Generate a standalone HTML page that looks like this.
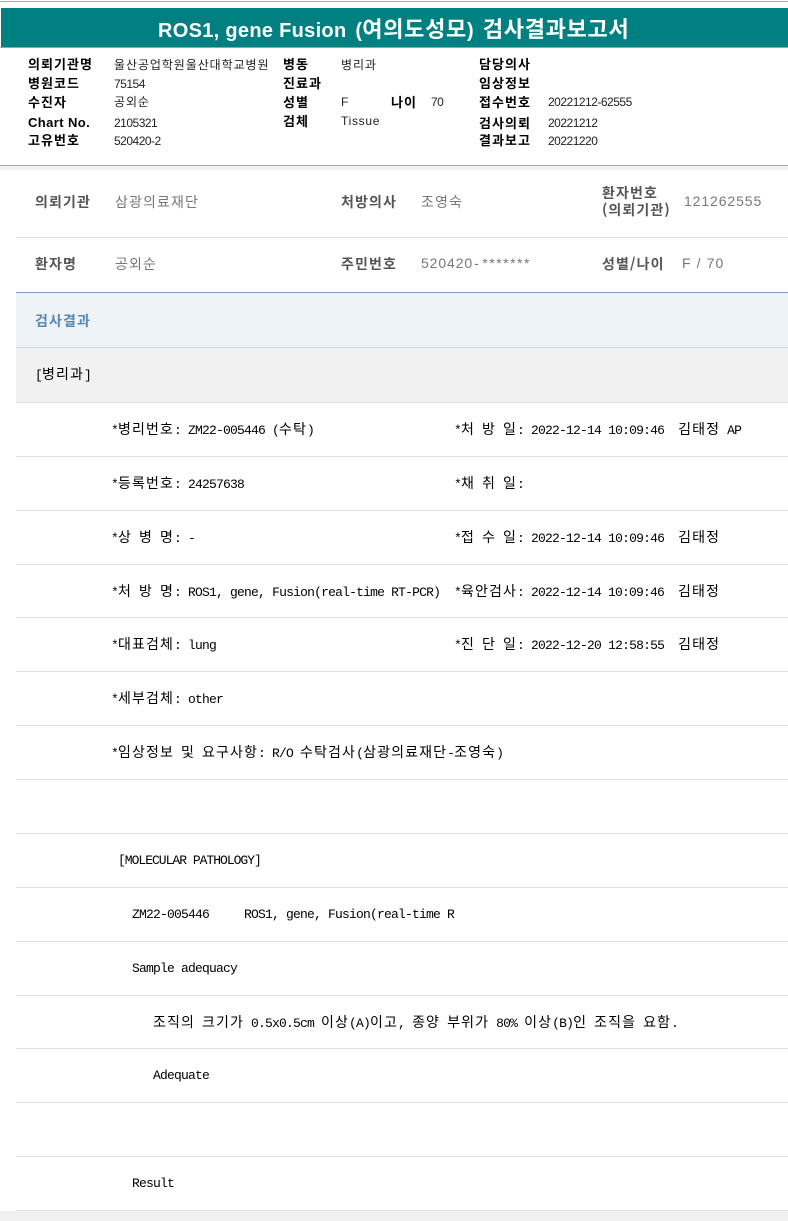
<!DOCTYPE html>
<html lang="ko"><head><meta charset="utf-8"><title>검사결과보고서</title>
<style>
html,body{margin:0;padding:0;background:#fff}
#p{position:relative;width:788px;height:1221px;overflow:hidden;background:#fff}
#p div{position:absolute;white-space:pre}
.r{height:1px;left:16px;width:772px;background:#e0e0e0}
.m{font:13px/20px "Liberation Mono","Noto Sans CJK KR",monospace;letter-spacing:-.8px;color:#000;height:20px}
.m i{font:14px/20px "Noto Sans CJK KR",sans-serif;letter-spacing:1.12px}
.hl,.hv{height:18px}
.hl{font:bold 13px/18px "Noto Sans CJK KR","Liberation Sans",sans-serif;letter-spacing:1.05px;color:#000}
.hl.e{font-family:"Liberation Sans","Noto Sans CJK KR",sans-serif;letter-spacing:.4px}
.hv{font:12px/18px "Noto Sans CJK KR",sans-serif;letter-spacing:.92px;color:#222}
.hv.n{font-family:"Liberation Sans",sans-serif;letter-spacing:-.5px}
.hv.t{font-family:"Liberation Sans",sans-serif;letter-spacing:.7px}
.l,.v{height:20px}
.l{font:bold 14px/20px "Noto Sans CJK KR","Liberation Sans",sans-serif;letter-spacing:1.12px;color:#555}
.v{font:14px/20px "Noto Sans CJK KR",sans-serif;letter-spacing:1.12px;color:#777}
.v.n{font-family:"Liberation Sans",sans-serif;letter-spacing:.9px}
.tt{font:bold 20px/32px "Liberation Sans",sans-serif;letter-spacing:.3px;color:#fff}
.tt i{font:bold 22px/32px "Noto Sans CJK KR",sans-serif;letter-spacing:.7px}
.tt span{margin-left:3px}
</style></head><body><div id="p">
<div style="left:0;top:1px;width:788px;height:1px;background:#aaa"></div>
<div style="left:1px;top:8px;width:787px;height:39px;background:#008080"></div>
<div style="left:0;top:47px;width:788px;height:1px;background:#8fa8a8"></div>
<div class="tt" style="left:158px;top:12px;height:32px">ROS1, gene Fusion <span>(</span><i>여의도성모</i>) <span></span><i>검사결과보고서</i></div>

<div class="hl" style="left:28px;top:55px">의뢰기관명</div><div class="hv" style="left:114px;top:56px">울산공업학원울산대학교병원</div>
<div class="hl" style="left:28px;top:74px">병원코드</div><div class="hv n" style="left:114px;top:75px">75154</div>
<div class="hl" style="left:28px;top:93px">수진자</div><div class="hv" style="left:114px;top:93px">공외순</div>
<div class="hl e" style="left:28px;top:114px">Chart No.</div><div class="hv n" style="left:114px;top:114px">2105321</div>
<div class="hl" style="left:28px;top:131px">고유번호</div><div class="hv n" style="left:114px;top:132px">520420-2</div>

<div class="hl" style="left:283px;top:55px">병동</div><div class="hv" style="left:341px;top:56px">병리과</div>
<div class="hl" style="left:283px;top:74px">진료과</div>
<div class="hl" style="left:283px;top:93px">성별</div><div class="hv t" style="left:341px;top:93px">F</div>
<div class="hl" style="left:391px;top:93px">나이</div><div class="hv n" style="left:431px;top:93px">70</div>
<div class="hl" style="left:283px;top:112px">검체</div><div class="hv t" style="left:341px;top:112px">Tissue</div>

<div class="hl" style="left:479px;top:55px">담당의사</div>
<div class="hl" style="left:479px;top:74px">임상정보</div>
<div class="hl" style="left:479px;top:93px">접수번호</div><div class="hv n" style="left:548px;top:93px">20221212-62555</div>
<div class="hl" style="left:479px;top:114px">검사의뢰</div><div class="hv n" style="left:548px;top:114px">20221212</div>
<div class="hl" style="left:479px;top:131px">결과보고</div><div class="hv n" style="left:548px;top:132px">20221220</div>

<div style="left:0;top:165px;width:788px;height:1px;background:#aaa"></div>
<div style="left:0;top:166px;width:788px;height:4px;background:#f0f0f0"></div>

<div class="l" style="left:35px;top:192px">의뢰기관</div><div class="v" style="left:115px;top:192px">삼광의료재단</div>
<div class="l" style="left:341px;top:192px">처방의사</div><div class="v" style="left:421px;top:192px">조영숙</div>
<div class="l" style="left:602px;top:183px">환자번호</div><div class="l" style="left:602px;top:200px">(의뢰기관)</div>
<div class="v n" style="left:684px;top:191px">121262555</div>
<div class="r" style="top:237px"></div>

<div class="l" style="left:35px;top:254px">환자명</div><div class="v" style="left:115px;top:254px">공외순</div>
<div class="l" style="left:341px;top:254px">주민번호</div><div class="v n" style="left:421px;top:253px">520420<span style="letter-spacing:3.5px;margin-left:1px">-</span><span style="letter-spacing:1.5px">*******</span></div>
<div class="l" style="left:602px;top:254px">성별/나이</div><div class="v n" style="left:682px;top:253px;letter-spacing:1.1px">F / 70</div>

<div style="left:16px;top:293px;width:772px;height:54px;background:#eef3f8"></div>
<div style="left:16px;top:292px;width:772px;height:1px;background:#7c9cb8"></div>
<div class="l" style="left:35px;top:311px;color:#5a87b0">검사결과</div>
<div style="left:16px;top:348px;width:772px;height:54px;background:#f1f1f1"></div>
<div style="left:16px;top:347px;width:772px;height:1px;background:#d0dae6"></div>
<div class="m" style="left:35px;top:364px">[<i>병리과</i>]</div>

<div class="r" style="top:402px"></div><div class="r" style="top:456px"></div><div class="r" style="top:510px"></div><div class="r" style="top:564px"></div><div class="r" style="top:617px"></div><div class="r" style="top:671px"></div><div class="r" style="top:725px"></div><div class="r" style="top:779px"></div><div class="r" style="top:833px"></div><div class="r" style="top:887px"></div><div class="r" style="top:941px"></div><div class="r" style="top:995px"></div><div class="r" style="top:1048px"></div><div class="r" style="top:1102px"></div><div class="r" style="top:1156px"></div><div class="r" style="top:1210px"></div>

<div class="m" style="left:111px;top:419px">*<i>병리번호</i>: ZM22-005446 (<i>수탁</i>)</div>
<div class="m" style="left:454px;top:419px">*<i>처</i> <i>방</i> <i>일</i>: 2022-12-14 10:09:46  <i>김태정</i> AP</div>
<div class="m" style="left:111px;top:473px">*<i>등록번호</i>: 24257638</div>
<div class="m" style="left:454px;top:473px">*<i>채</i> <i>취</i> <i>일</i>:</div>
<div class="m" style="left:111px;top:527px">*<i>상</i> <i>병</i> <i>명</i>: -</div>
<div class="m" style="left:454px;top:527px">*<i>접</i> <i>수</i> <i>일</i>: 2022-12-14 10:09:46  <i>김태정</i></div>
<div class="m" style="left:111px;top:581px">*<i>처</i> <i>방</i> <i>명</i>: ROS1, gene, Fusion(real-time RT-PCR)</div>
<div class="m" style="left:454px;top:581px">*<i>육안검사</i>: 2022-12-14 10:09:46  <i>김태정</i></div>
<div class="m" style="left:111px;top:634px">*<i>대표검체</i>: lung</div>
<div class="m" style="left:454px;top:634px">*<i>진</i> <i>단</i> <i>일</i>: 2022-12-20 12:58:55  <i>김태정</i></div>
<div class="m" style="left:111px;top:688px">*<i>세부검체</i>: other</div>
<div class="m" style="left:111px;top:742px">*<i>임상정보</i> <i>및</i> <i>요구사항</i>: R/O <i>수탁검사</i>(<i>삼광의료재단</i>-<i>조영숙</i>)</div>
<div class="m" style="left:118px;top:851px;letter-spacing:-1px">[MOLECULAR PATHOLOGY]</div>
<div class="m" style="left:132px;top:905px">ZM22-005446     ROS1, gene, Fusion(real-time R</div>
<div class="m" style="left:132px;top:959px">Sample adequacy</div>
<div class="m" style="left:153px;top:1012px"><i>조직의</i> <i>크기가</i> 0.5x0.5cm <i>이상</i>(A)<i>이고</i>, <i>종양</i> <i>부위가</i> 80% <i>이상</i>(B)<i>인</i> <i>조직을</i> <i>요함</i>.</div>
<div class="m" style="left:153px;top:1066px">Adequate</div>
<div class="m" style="left:132px;top:1174px">Result</div>
<div style="left:0;top:1211px;width:788px;height:10px;background:#f0f0f0"></div>
</div></body></html>
